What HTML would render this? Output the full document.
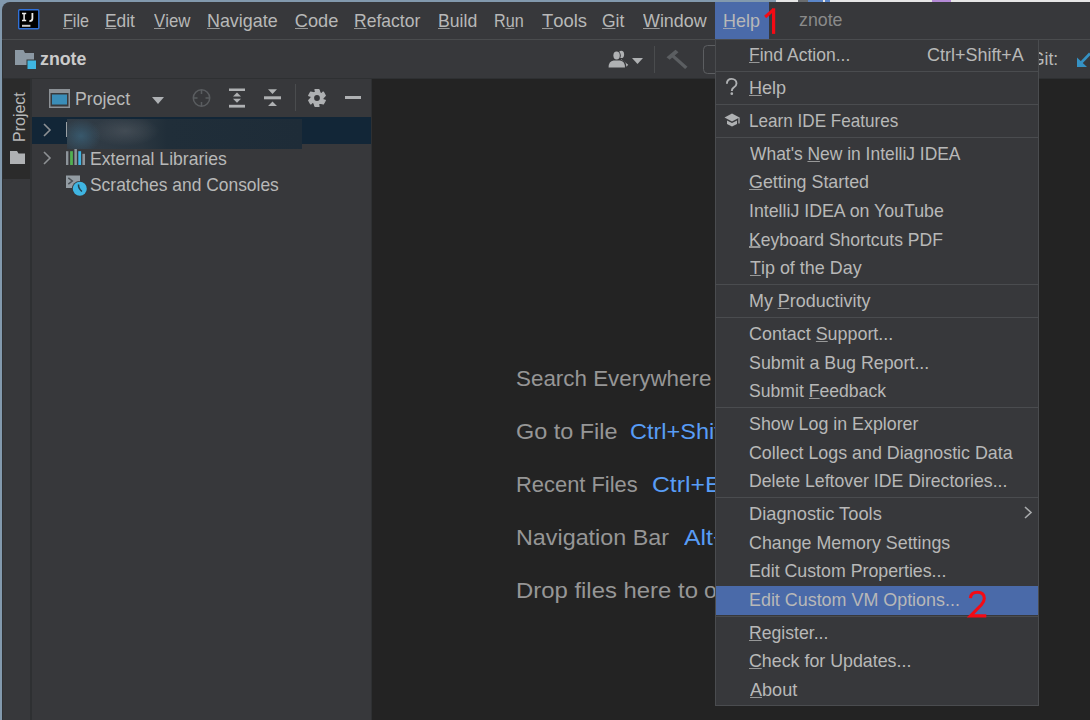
<!DOCTYPE html><html><head><meta charset="utf-8"><style>
html,body{margin:0;padding:0;width:1090px;height:720px;overflow:hidden;background:#8299ad;font-family:"Liberation Sans", sans-serif;}
.t{position:absolute;white-space:nowrap;line-height:1;}
.r{position:absolute;}
u{text-decoration:none;position:relative;}
u:after{content:"";position:absolute;left:0;right:0;bottom:2px;height:1.3px;background:currentColor;opacity:.75}
svg{position:absolute;overflow:visible}
</style></head><body>
<div class="r" style="left:776px;top:0px;width:314px;height:2px;background:#e6e6e6;"></div>
<div class="r" style="left:798px;top:0px;width:10px;height:2px;background:#6a6d70;"></div>
<div class="r" style="left:808px;top:0px;width:15px;height:2px;background:#5b86c9;"></div>
<div class="r" style="left:825px;top:0px;width:5px;height:2px;background:#5b86c9;"></div>
<div class="r" style="left:932px;top:0px;width:19px;height:2px;background:#b48ad6;"></div>
<div class="r" style="left:2px;top:2px;width:1088px;height:718px;background:#37383b;border-top-left-radius:8px;"></div>
<div class="r" style="left:2px;top:39px;width:1088px;height:1px;background:#4a4c4e;"></div>
<div class="r" style="left:2px;top:78px;width:1088px;height:1px;background:#2e3032;"></div>
<div class="r" style="left:372px;top:79px;width:718px;height:641px;background:#232323;"></div>
<div class="r" style="left:371px;top:79px;width:1px;height:641px;background:#2e3032;"></div>
<div class="r" style="left:2px;top:79px;width:28px;height:641px;background:#37383b;"></div>
<div class="r" style="left:2px;top:79px;width:28px;height:100px;background:#2b2b2b;"></div>
<div class="r" style="left:30px;top:79px;width:2px;height:641px;background:#2e3032;"></div>
<div class="r" style="left:2px;top:40px;width:1px;height:680px;background:#2f3133;"></div>
<div class="t" style="left:24px;top:142px;font-size:16px;color:#b8b8b8;transform:rotate(-90deg);transform-origin:0 0;line-height:1;"><span style="position:relative;top:-12.5px">Project</span></div>
<svg style="left:10px;top:151px" width="15" height="13" viewBox="0 0 15 13"><path d="M0 0h7l1.5 2.5H15V13H0z" fill="#afb1b3"/></svg>
<svg style="left:18px;top:9px" width="22" height="21" viewBox="0 0 22 21"><rect x="0.7" y="0.7" width="20.1" height="19.1" rx="1" fill="#000" stroke="#3071d8" stroke-width="1.4"/><path d="M4 4.6h4.2M6.1 4.6v6.9M4 11.4h4.2" stroke="#ececec" stroke-width="1.5" fill="none"/><path d="M14.4 4v5.6q0 2.6-3 2.6" stroke="#ececec" stroke-width="1.8" fill="none"/><rect x="4" y="15.8" width="8.4" height="2" fill="#c8c8c8"/></svg>
<div class="t" style="left:63.21px;top:11.99px;font-size:18.2px;color:#b8b8b8;transform:scaleX(0.8857);transform-origin:0 0;"><u>F</u>ile</div>
<div class="t" style="left:105.25px;top:11.99px;font-size:18.2px;color:#b8b8b8;transform:scaleX(0.9548);transform-origin:0 0;"><u>E</u>dit</div>
<div class="t" style="left:153.50px;top:11.99px;font-size:18.2px;color:#b8b8b8;transform:scaleX(0.9225);transform-origin:0 0;"><u>V</u>iew</div>
<div class="t" style="left:206.72px;top:11.99px;font-size:18.2px;color:#b8b8b8;transform:scaleX(0.9831);transform-origin:0 0;"><u>N</u>avigate</div>
<div class="t" style="left:294.80px;top:11.99px;font-size:18.2px;color:#b8b8b8;"><u>C</u>ode</div>
<div class="t" style="left:354.34px;top:11.99px;font-size:18.2px;color:#b8b8b8;transform:scaleX(0.9647);transform-origin:0 0;"><u>R</u>efactor</div>
<div class="t" style="left:437.83px;top:11.99px;font-size:18.2px;color:#b8b8b8;transform:scaleX(0.9692);transform-origin:0 0;"><u>B</u>uild</div>
<div class="t" style="left:494.31px;top:11.99px;font-size:18.2px;color:#b8b8b8;transform:scaleX(0.8875);transform-origin:0 0;">R<u>u</u>n</div>
<div class="t" style="left:542.30px;top:11.99px;font-size:18.2px;color:#b8b8b8;transform:scaleX(1.0119);transform-origin:0 0;"><u>T</u>ools</div>
<div class="t" style="left:602.44px;top:11.99px;font-size:18.2px;color:#b8b8b8;transform:scaleX(0.9609);transform-origin:0 0;"><u>G</u>it</div>
<div class="t" style="left:642.80px;top:11.99px;font-size:18.2px;color:#b8b8b8;transform:scaleX(0.9831);transform-origin:0 0;"><u>W</u>indow</div>
<div class="r" style="left:715px;top:2px;width:54px;height:37px;background:#4a6aa9;"></div>
<div class="t" style="left:723.01px;top:11.99px;font-size:18.2px;color:#b8b8b8;transform:scaleX(0.9861);transform-origin:0 0;"><u>H</u>elp</div>
<div class="t" style="left:799.00px;top:11.19px;font-size:18.2px;color:#8a8a8a;transform:scaleX(0.9773);transform-origin:0 0;">znote</div>
<svg style="left:15px;top:50px" width="22" height="20" viewBox="0 0 22 20"><path d="M0 0h8.5l1.5 3H19v12H0z" fill="#8b98a3"/><rect x="11.5" y="9.5" width="10" height="10" fill="#37383b"/><rect x="12.5" y="10.5" width="8.5" height="8.5" fill="#3fb5e0"/></svg>
<div class="t" style="left:40.00px;top:50.63px;font-size:17.8px;color:#cbcbcb;font-weight:bold;">znote</div>
<svg style="left:608px;top:50px" width="21" height="18" viewBox="0 0 21 18"><ellipse cx="13.3" cy="4.4" rx="2.8" ry="3.7" fill="#afb1b3"/><path d="M13.2 9.2l7 5.6-1.7 1.9-6.6-5.2z" fill="#afb1b3"/><ellipse cx="8.6" cy="5.5" rx="4.2" ry="5.1" fill="#37383b"/><path d="M-1 17.8q0-7.6 6-8h7.5q6 .4 6 8z" fill="#37383b"/><ellipse cx="8.6" cy="5.5" rx="3.2" ry="4.1" fill="#afb1b3"/><path d="M0.6 17.5q0-6.4 5-7h6.4q5 .6 5 7z" fill="#afb1b3"/></svg>
<svg style="left:632px;top:58px" width="11" height="6" viewBox="0 0 11 6"><path d="M0 0h11L5.5 6z" fill="#afb1b3"/></svg>
<div class="r" style="left:654px;top:46px;width:1px;height:27px;background:#4a4c4e;"></div>
<svg style="left:666px;top:48px" width="22" height="21" viewBox="0 0 22 21"><path d="M0.5 9.2L9.5 1.8l3 2.4-8.8 7.6z" fill="#5b5e61"/><path d="M6.5 5.5l15 13.2-2.4 2.3L4.2 7.8z" fill="#5b5e61"/></svg>
<svg style="left:703px;top:45px" width="20" height="29" viewBox="0 0 20 29"><rect x="0.5" y="0.5" width="30" height="28" rx="4" fill="none" stroke="#5c5e61"/></svg>
<div class="t" style="left:1031.00px;top:50.79px;font-size:17.5px;color:#b8b8b8;">Git:</div>
<svg style="left:1077px;top:51px" width="13" height="16" viewBox="0 0 13 16"><path d="M1.5 14.5L13 2.5" stroke="#3592c4" stroke-width="2.6" fill="none"/><path d="M0 6.5v9.5h10z" fill="#3592c4"/></svg>
<svg style="left:49px;top:89px" width="21" height="19" viewBox="0 0 21 19"><rect x="0.75" y="0.75" width="19.5" height="17.5" fill="none" stroke="#8c9196" stroke-width="1.5"/><rect x="0" y="0" width="21" height="4" fill="#8c9196"/><rect x="3" y="5.5" width="15" height="10" fill="#3a8db8"/></svg>
<div class="t" style="left:74.83px;top:90.19px;font-size:18.2px;color:#b8b8b8;transform:scaleX(0.9732);transform-origin:0 0;">Project</div>
<svg style="left:151px;top:96px" width="14" height="9" viewBox="0 0 14 9"><path d="M1 1h12L7 8z" fill="#aeb1b4"/></svg>
<svg style="left:192px;top:89px" width="19" height="19" viewBox="0 0 19 19"><circle cx="9.5" cy="9" r="8.2" fill="none" stroke="#5a5d60" stroke-width="1.5"/><path d="M9.5 1v4M9.5 13v4M1.5 9h4M13.5 9h4" stroke="#5a5d60" stroke-width="1.5"/></svg>
<svg style="left:228px;top:88px" width="18" height="20" viewBox="0 0 18 20"><rect x="1" y="0.5" width="16" height="2.5" fill="#afb1b3"/><rect x="1" y="16.8" width="16" height="2.8" fill="#afb1b3"/><path d="M5 8.5h8L9 4.5z M5 10.8h8L9 14.8z" fill="#afb1b3"/></svg>
<svg style="left:263px;top:88px" width="19" height="20" viewBox="0 0 19 20"><rect x="1" y="8.3" width="17" height="3" fill="#afb1b3"/><path d="M5 1.2h9L9.5 6z M5 18h9L9.5 13.5z" fill="#afb1b3"/></svg>
<div class="r" style="left:294.5px;top:84px;width:1px;height:27px;background:#4a4c4e;"></div>
<svg style="left:308px;top:89px" width="18" height="18" viewBox="0 0 18 18"><polygon points="7.07,0.62 10.93,0.62 11.95,3.89 13.31,4.98 15.29,3.13 17.22,6.49 14.90,9.00 14.64,10.72 17.22,11.51 15.29,14.87 11.95,14.11 10.33,14.75 10.93,17.38 7.07,17.38 6.05,14.11 4.69,13.02 2.71,14.87 0.78,11.51 3.10,9.00 3.36,7.28 0.78,6.49 2.71,3.13 6.05,3.89 7.67,3.25" fill="#afb1b3" stroke="#afb1b3" stroke-width="1.4" stroke-linejoin="round"/><circle cx="9" cy="9" r="2.9" fill="#37383b"/></svg>
<div class="r" style="left:344.5px;top:96.3px;width:16.5px;height:3px;background:#afb1b3;"></div>
<div class="r" style="left:32px;top:117px;width:339px;height:27px;background:#122637;"></div>
<svg style="left:43px;top:123px" width="9" height="14" viewBox="0 0 9 14"><path d="M1 1l6 6-6 6" fill="none" stroke="#8e9194" stroke-width="1.6"/></svg>
<div class="r" style="left:66.5px;top:118.5px;width:235.5px;height:30px;background:radial-gradient(ellipse 20px 17px at 14px 17px, rgba(62,112,140,.55), rgba(62,112,140,0)), radial-gradient(ellipse 34px 15px at 58px 12px, rgba(78,86,94,.65), rgba(78,86,94,0)), linear-gradient(90deg,#313c46 0,#2f3a44 40px,#2a3640 75px,#202e39 100px,#1e2c38 100%);"></div>
<div class="r" style="left:66px;top:122px;width:1px;height:15px;background:#9aa0a4;"></div>
<svg style="left:43px;top:151px" width="9" height="14" viewBox="0 0 9 14"><path d="M1 1l6 6-6 6" fill="none" stroke="#8e9194" stroke-width="1.6"/></svg>
<svg style="left:66px;top:149px" width="20" height="16" viewBox="0 0 20 16"><rect x="0" y="2.2" width="2.4" height="13.8" fill="#8d949a"/><rect x="4.1" y="2.2" width="2.8" height="13.8" fill="#52b052"/><rect x="8.4" y="0" width="2.5" height="16" fill="#8d949a"/><rect x="12.3" y="2.2" width="2.8" height="13.8" fill="#3fb3e2"/><rect x="16.4" y="4.8" width="2.6" height="11.2" fill="#8d949a"/></svg>
<div class="t" style="left:90.33px;top:149.79px;font-size:18.2px;color:#b8b8b8;transform:scaleX(0.9664);transform-origin:0 0;">External Libraries</div>
<svg style="left:66px;top:175px" width="22" height="22" viewBox="0 0 22 22"><rect x="0" y="0.5" width="14" height="12.5" fill="#939ca3"/><path d="M2.3 2.8l4 3.2-4 3.2" fill="none" stroke="#4a5056" stroke-width="1.5"/><circle cx="13.8" cy="13.8" r="7.9" fill="#37383b"/><circle cx="13.8" cy="13.8" r="7" fill="#3fb5e2"/><path d="M12.6 9.5q-0.6 3.5 3.3 7" fill="none" stroke="#23424f" stroke-width="1.6"/></svg>
<div class="t" style="left:90.34px;top:176.09px;font-size:18.2px;color:#b8b8b8;transform:scaleX(0.9577);transform-origin:0 0;">Scratches and Consoles</div>
<div class="t" style="left:515.90px;top:368.05px;font-size:22.5px;color:#969696;transform:scaleX(0.9954);transform-origin:0 0;">Search Everywhere</div>
<div class="t" style="left:515.96px;top:421.15px;font-size:22.5px;color:#969696;transform:scaleX(1.0406);transform-origin:0 0;">Go to File</div>
<div class="t" style="left:630.21px;top:421.15px;font-size:22.5px;color:#589df6;transform:scaleX(1.0443);transform-origin:0 0;">Ctrl+Shift+N</div>
<div class="t" style="left:516.33px;top:474.05px;font-size:22.5px;color:#969696;transform:scaleX(0.9734);transform-origin:0 0;">Recent Files</div>
<div class="t" style="left:652.20px;top:474.05px;font-size:22.5px;color:#589df6;transform:scaleX(1.1000);transform-origin:0 0;">Ctrl+E</div>
<div class="t" style="left:515.96px;top:527.15px;font-size:22.5px;color:#969696;transform:scaleX(1.0367);transform-origin:0 0;">Navigation Bar</div>
<div class="t" style="left:684.00px;top:527.15px;font-size:22.5px;color:#589df6;transform:scaleX(1.1000);transform-origin:0 0;">Alt+Home</div>
<div class="t" style="left:515.94px;top:580.25px;font-size:22.5px;color:#969696;transform:scaleX(1.0618);transform-origin:0 0;">Drop files here to</div>
<div class="t" style="left:704.18px;top:580.25px;font-size:22.5px;color:#969696;transform:scaleX(1.0200);transform-origin:0 0;">open</div>
<div class="r" style="left:715px;top:39px;width:324px;height:667px;background:#37383b;box-sizing:border-box;border:1px solid #4a4c4f;"></div>
<div class="t" style="left:749.34px;top:45.89px;font-size:18.2px;color:#b8b8b8;transform:scaleX(0.9631);transform-origin:0 0;"><u>F</u>ind Action...</div>
<div class="r" style="left:716px;top:71px;width:322px;height:1px;background:#4a4c4f;"></div>
<div class="t" style="left:749.31px;top:78.89px;font-size:18.2px;color:#b8b8b8;transform:scaleX(0.9917);transform-origin:0 0;"><u>H</u>elp</div>
<div class="r" style="left:716px;top:104px;width:322px;height:1px;background:#4a4c4f;"></div>
<div class="t" style="left:749.36px;top:111.89px;font-size:18.2px;color:#b8b8b8;transform:scaleX(0.9408);transform-origin:0 0;">Learn IDE Features</div>
<div class="r" style="left:716px;top:137px;width:322px;height:1px;background:#4a4c4f;"></div>
<div class="t" style="left:750.30px;top:144.89px;font-size:18.2px;color:#b8b8b8;transform:scaleX(0.9577);transform-origin:0 0;">What's <u>N</u>ew in IntelliJ IDEA</div>
<div class="t" style="left:749.32px;top:173.44px;font-size:18.2px;color:#b8b8b8;transform:scaleX(0.9810);transform-origin:0 0;"><u>G</u>etting Started</div>
<div class="t" style="left:749.32px;top:201.99px;font-size:18.2px;color:#b8b8b8;transform:scaleX(0.9763);transform-origin:0 0;">IntelliJ IDEA on YouTube</div>
<div class="t" style="left:749.34px;top:230.54px;font-size:18.2px;color:#b8b8b8;transform:scaleX(0.9635);transform-origin:0 0;"><u>K</u>eyboard Shortcuts PDF</div>
<div class="t" style="left:750.30px;top:259.09px;font-size:18.2px;color:#b8b8b8;transform:scaleX(0.9858);transform-origin:0 0;"><u>T</u>ip of the Day</div>
<div class="r" style="left:716px;top:284px;width:322px;height:1px;background:#4a4c4f;"></div>
<div class="t" style="left:749.32px;top:292.09px;font-size:18.2px;color:#b8b8b8;transform:scaleX(0.9846);transform-origin:0 0;">My <u>P</u>roductivity</div>
<div class="r" style="left:716px;top:317px;width:322px;height:1px;background:#4a4c4f;"></div>
<div class="t" style="left:749.32px;top:325.09px;font-size:18.2px;color:#b8b8b8;transform:scaleX(0.9840);transform-origin:0 0;">Contact <u>S</u>upport...</div>
<div class="t" style="left:749.32px;top:353.64px;font-size:18.2px;color:#b8b8b8;transform:scaleX(0.9797);transform-origin:0 0;">Submit a Bug Report...</div>
<div class="t" style="left:749.33px;top:382.19px;font-size:18.2px;color:#b8b8b8;transform:scaleX(0.9681);transform-origin:0 0;">Submit <u>F</u>eedback</div>
<div class="r" style="left:716px;top:407px;width:322px;height:1px;background:#4a4c4f;"></div>
<div class="t" style="left:749.32px;top:415.19px;font-size:18.2px;color:#b8b8b8;transform:scaleX(0.9802);transform-origin:0 0;">Show Log in Explorer</div>
<div class="t" style="left:749.32px;top:443.74px;font-size:18.2px;color:#b8b8b8;transform:scaleX(0.9802);transform-origin:0 0;">Collect Logs and Diagnostic Data</div>
<div class="t" style="left:749.33px;top:472.29px;font-size:18.2px;color:#b8b8b8;transform:scaleX(0.9720);transform-origin:0 0;">Delete Leftover IDE Directories...</div>
<div class="r" style="left:716px;top:497px;width:322px;height:1px;background:#4a4c4f;"></div>
<svg style="left:1024px;top:506px" width="9" height="13" viewBox="0 0 9 13"><path d="M1 1l6 5.5-6 5.5" fill="none" stroke="#a8aaac" stroke-width="1.6"/></svg>
<div class="t" style="left:749.29px;top:505.29px;font-size:18.2px;color:#b8b8b8;transform:scaleX(1.0053);transform-origin:0 0;">Diagnostic Tools</div>
<div class="t" style="left:749.32px;top:533.84px;font-size:18.2px;color:#b8b8b8;transform:scaleX(0.9809);transform-origin:0 0;">Change Memory Settings</div>
<div class="t" style="left:749.32px;top:562.39px;font-size:18.2px;color:#b8b8b8;transform:scaleX(0.9765);transform-origin:0 0;">Edit Custom Properties...</div>
<div class="r" style="left:716px;top:585.5px;width:322px;height:29px;background:#4a6aa9;"></div>
<div class="t" style="left:749.32px;top:590.94px;font-size:18.2px;color:#b8b8b8;transform:scaleX(0.9840);transform-origin:0 0;">Edit Custom VM Options...</div>
<div class="r" style="left:716px;top:616px;width:322px;height:1px;background:#4a4c4f;"></div>
<div class="t" style="left:749.33px;top:623.94px;font-size:18.2px;color:#b8b8b8;transform:scaleX(0.9688);transform-origin:0 0;"><u>R</u>egister...</div>
<div class="t" style="left:749.32px;top:652.49px;font-size:18.2px;color:#b8b8b8;transform:scaleX(0.9793);transform-origin:0 0;"><u>C</u>heck for Updates...</div>
<div class="t" style="left:750.30px;top:681.04px;font-size:18.2px;color:#b8b8b8;transform:scaleX(0.9938);transform-origin:0 0;"><u>A</u>bout</div>
<div class="t" style="left:927.01px;top:45.89px;font-size:18.2px;color:#b8b8b8;transform:scaleX(0.9876);transform-origin:0 0;">Ctrl+Shift+A</div>
<svg style="left:724px;top:77px" width="15" height="19" viewBox="0 0 15 19"><path d="M2.9 6.8C2.9 3.6 5 1.9 7.7 1.9C10.5 1.9 12.5 3.8 12.5 6.4C12.5 8.6 11 9.6 9.6 10.6C8.4 11.4 7.8 12.2 7.8 14" fill="none" stroke="#afb1b3" stroke-width="1.9"/><circle cx="7.8" cy="16.7" r="1.35" fill="#afb1b3"/></svg>
<svg style="left:724px;top:112px" width="17" height="15" viewBox="0 0 17 15"><path d="M0.5 5.5L8 1.5l7.5 4L8 9.5z" fill="#afb1b3"/><path d="M3 8.5v3.5l5 2.5 5-2.5V8.5L8 11z" fill="#afb1b3"/><path d="M15 5.5v6" stroke="#afb1b3" stroke-width="1.3"/></svg>
<svg style="left:764px;top:8px" width="12" height="27" viewBox="0 0 12 27"><path d="M9.6 0.3V25.9" stroke="#f50a14" stroke-width="3.2" fill="none"/><path d="M1.2 9L9.6 1.6" stroke="#f50a14" stroke-width="3.2" fill="none"/></svg>
<svg style="left:968px;top:590px" width="19" height="28" viewBox="0 0 19 28"><path d="M2.4 8.2Q2.8 2.3 9.4 2.3Q16.3 2.3 16.3 8.6Q16.3 11.6 13.2 15L2.4 25.9H18.3" stroke="#f50a14" stroke-width="3.1" fill="none" stroke-linejoin="miter"/></svg>
</body></html>
